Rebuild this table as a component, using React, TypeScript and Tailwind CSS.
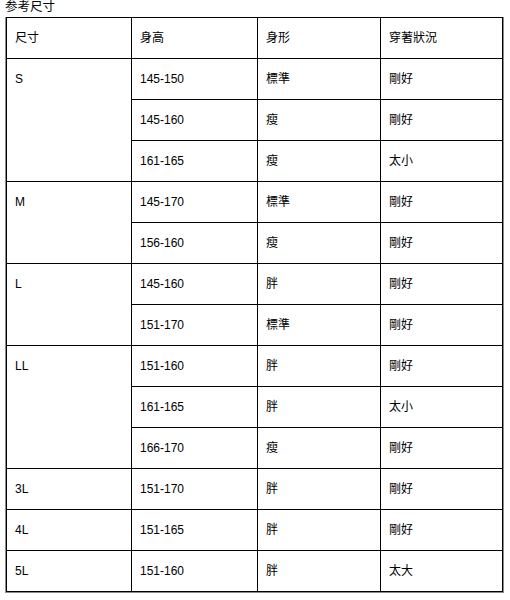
type Row = { size: string; height: string; shape: string; fit: string }

const GROUPS: { size: string; rows: Omit<Row, 'size'>[] }[] = [
  {
    size: 'S',
    rows: [
      { height: '145-150', shape: '標準', fit: '剛好' },
      { height: '145-160', shape: '瘦', fit: '剛好' },
      { height: '161-165', shape: '瘦', fit: '太小' },
    ],
  },
  {
    size: 'M',
    rows: [
      { height: '145-170', shape: '標準', fit: '剛好' },
      { height: '156-160', shape: '瘦', fit: '剛好' },
    ],
  },
  {
    size: 'L',
    rows: [
      { height: '145-160', shape: '胖', fit: '剛好' },
      { height: '151-170', shape: '標準', fit: '剛好' },
    ],
  },
  {
    size: 'LL',
    rows: [
      { height: '151-160', shape: '胖', fit: '剛好' },
      { height: '161-165', shape: '胖', fit: '太小' },
      { height: '166-170', shape: '瘦', fit: '剛好' },
    ],
  },
  { size: '3L', rows: [{ height: '151-170', shape: '胖', fit: '剛好' }] },
  { size: '4L', rows: [{ height: '151-165', shape: '胖', fit: '剛好' }] },
  { size: '5L', rows: [{ height: '151-160', shape: '胖', fit: '太大' }] },
]

const cell =
  'border border-black align-top pl-2 pt-[13px] h-[41px] font-normal text-left text-black'

export default function App() {
  return (
    <div
      className="w-[510px] h-[600px] bg-white text-black text-[12px] leading-[15px]"
      style={{ fontFamily: '"Liberation Sans", Arial, "Noto Sans CJK TC", "Noto Sans CJK SC", sans-serif' }}
    >
      <div className="pl-[5px] h-[17px] text-[12.5px] leading-[15px]">参考尺寸</div>
      <div className="ml-[5px] w-[499px] border-l border-r border-b border-[#8a8a8a]">
        <table className="w-full border-collapse table-fixed">
          <colgroup>
            <col className="w-[125px]" />
            <col className="w-[126px]" />
            <col className="w-[123px]" />
            <col />
          </colgroup>
          <thead>
            <tr>
              <th className={cell}>尺寸</th>
              <th className={cell}>身高</th>
              <th className={cell}>身形</th>
              <th className={cell}>穿著狀況</th>
            </tr>
          </thead>
          <tbody>
            {GROUPS.map((g) =>
              g.rows.map((r, i) => (
                <tr key={g.size + i}>
                  {i === 0 && (
                    <td rowSpan={g.rows.length} className={cell}>
                      {g.size}
                    </td>
                  )}
                  <td className={cell}>{r.height}</td>
                  <td className={cell}>{r.shape}</td>
                  <td className={cell}>{r.fit}</td>
                </tr>
              ))
            )}
          </tbody>
        </table>
      </div>
    </div>
  )
}
